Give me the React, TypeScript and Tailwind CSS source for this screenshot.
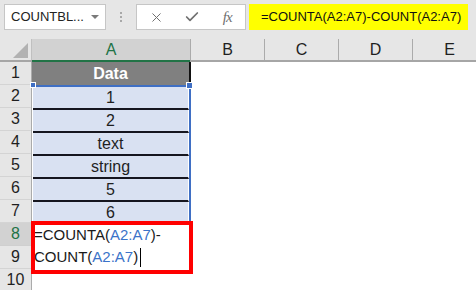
import { X, Check } from "lucide-react";

const font = { fontFamily: '"Liberation Sans", Arial, sans-serif' };

const values = ["1", "2", "text", "string", "5", "6"];
const otherCols = ["B", "C", "D", "E"];

function Ref({ children }: { children: string }) {
  return <span className="text-[#3b73c9]">{children}</span>;
}

export default function App() {
  return (
    <div className="w-[476px] h-[290px] overflow-hidden bg-white text-[#1f1f1f]" style={font}>
      {/* formula bar */}
      <div className="h-[39px] bg-[#e6e6e6] flex items-start pt-[4px] pl-[4px]">
        <div className="w-[102px] h-[26px] bg-white border border-[#c6c6c6] flex items-center pl-[6px] pr-[6px] text-[13px] text-[#222]">
          <span className="flex-1">COUNTBL...</span>
          <span className="w-0 h-0 border-l-[4px] border-r-[4px] border-t-[4px] border-l-transparent border-r-transparent border-t-[#7a7a7a]" />
        </div>
        <div className="w-[30px] h-[26px] flex flex-col items-center justify-center gap-[2px]">
          <span className="w-[2px] h-[2px] bg-[#a8a8a8]" />
          <span className="w-[2px] h-[2px] bg-[#a8a8a8]" />
          <span className="w-[2px] h-[2px] bg-[#a8a8a8]" />
        </div>
        <div className="w-[110px] h-[26px] bg-white border border-[#c6c6c6] flex items-center text-[#707070]">
          <div className="w-[37px] flex justify-center pl-[2px]">
            <X size={15} strokeWidth={1.6} />
          </div>
          <div className="w-[36px] flex justify-center">
            <Check size={16} strokeWidth={2.6} />
          </div>
          <div className="w-[36px] flex justify-center">
            <span className="italic text-[15px] tracking-[-1px]" style={{ fontFamily: '"Liberation Serif", serif' }}>
              fx
            </span>
          </div>
        </div>
        <div className="ml-[3px] w-[219px] h-[26px] bg-[#ffff00] flex items-center pl-[12px] text-[13px] text-[#111]">
          =COUNTA(A2:A7)-COUNT(A2:A7)
        </div>
      </div>

      {/* column headers */}
      <div className="flex h-[23px] border-b-2 border-[#a6a6a6] text-[16px]">
        <div className="w-[32px] h-[21px] shrink-0 bg-[#e6e6e6] border-r border-[#c0c0c0] flex items-end justify-end pr-[3px] pb-[2px]">
          <svg width="15" height="15" viewBox="0 0 15 15" className="block shrink-0">
            <path d="M15 0 L15 15 L0 15 Z" fill="#8f8f8f" fillOpacity="0.6" />
          </svg>
        </div>
        <div className="w-[159px] shrink-0 bg-[#d2d2d2] border-r border-[#ababab] flex items-center justify-center text-[#217346] relative">
          A
          <span className="absolute left-0 right-0 bottom-[-2px] h-[2px] bg-[#217346]" />
        </div>
        {otherCols.map(c => (
          <div key={c} className="w-[74px] shrink-0 bg-[#e6e6e6] border-r border-[#ababab] flex items-center justify-center">
            {c}
          </div>
        ))}
      </div>

      {/* body */}
      <div className="flex text-[16px]">
        <div className="w-[32px] shrink-0 bg-[#e6e6e6] border-r border-[#ababab] flex flex-col">
          {[1, 2, 3, 4, 5, 6, 7, 8, 9, 10].map(n => (
            <div
              key={n}
              className={
                n === 8
                  ? "h-[23px] shrink-0 border-b border-[#cfcfcf] bg-[#d2d2d2] flex items-center justify-center text-[#217346]"
                  : "h-[23px] shrink-0 border-b border-[#d4d4d4] flex items-center justify-center"
              }
            >
              {n}
            </div>
          ))}
        </div>

        <div className="w-[159px] shrink-0 flex flex-col">
          <div className="h-[23px] bg-[#808080] border-r-2 border-[#111] flex items-center justify-center text-white font-bold">
            Data
          </div>
          <div className="relative border-t-2 border-[#3f6fc4] border-l border-l-white border-r-2 border-r-[#3f6fc4] flex flex-col">
            <span className="absolute -left-[3px] -top-[5px] w-[6px] h-[6px] bg-[#3f6fc4] border border-white" />
            <span className="absolute -right-[4px] -top-[5px] w-[7px] h-[7px] bg-[#3f6fc4] border border-white" />
            {values.map((v, i) => (
              <div
                key={v}
                className={
                  i < 5
                    ? "h-[23px] bg-[#d9e1f2] border-b-2 border-[#15151f] border-r border-r-white flex items-center justify-center"
                    : "h-[21px] bg-[#d9e1f2] border-r border-r-white flex items-center justify-center"
                }
              >
                {v}
              </div>
            ))}
          </div>
          <div className="relative h-[46px] bg-white pl-[2px] text-[15px] leading-[22px] pt-[1px] text-[#1a1a1a]">
            <span className="absolute -left-[1px] -top-[2px] -right-[2px] -bottom-[5px] border-[4px] border-[#ff0000]" />
            <div>
              =COUNTA(<Ref>A2:A7</Ref>)-
            </div>
            <div className="flex items-center">
              COUNT(<Ref>A2:A7</Ref>)
              <span className="ml-[2px] w-px h-[19px] bg-black" />
            </div>
          </div>
        </div>

        <div className="flex-1 bg-white" />
      </div>
    </div>
  );
}
